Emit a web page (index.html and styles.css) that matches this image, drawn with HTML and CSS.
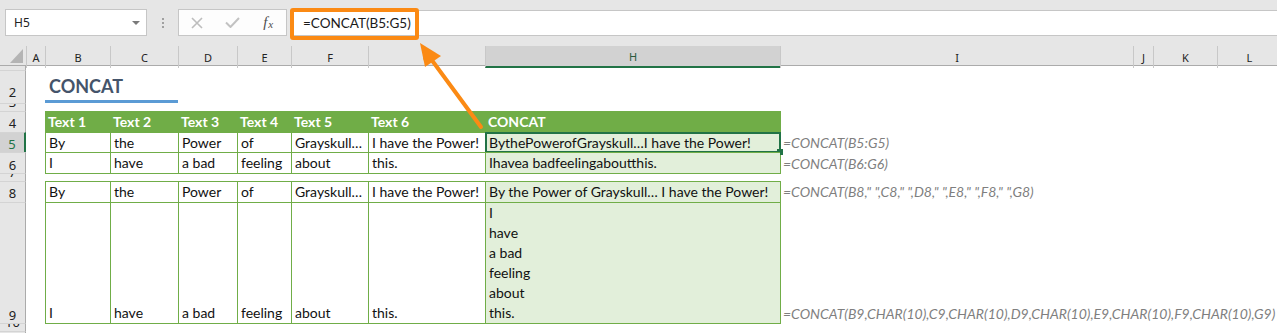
FILE: index.html
```html
<!DOCTYPE html>
<html lang="en">
<head>
    <meta charset="UTF-8">
    <meta name="viewport" content="width=device-width, initial-scale=1.0">
    <title>CONCAT</title>
    <link rel="stylesheet" href="styles.css">
</head>
<body>

    <div class="toolbar">
        <div class="namebox"><span>H5</span><span class="drop"></span></div>
        <div class="grip"><i></i><i></i><i></i></div>
        <div class="fbuttons">
            <span class="fbtn">
                <svg width="12" height="12" viewBox="0 0 12 12"><path d="M1 1 L11 11 M11 1 L1 11" stroke="#bdbdbd" stroke-width="1.6" fill="none"/></svg>
            </span>
            <span class="fbtn">
                <svg width="15" height="11" viewBox="0 0 15 11"><path d="M1 5.5 L5.5 10 L14 1" stroke="#c2c2c2" stroke-width="2" fill="none"/></svg>
            </span>
            <span class="fbtn fx"><i>f</i><i class="x">x</i></span>
        </div>
        <div class="formula">
            <span class="ftext">=CONCAT(B5:G5)</span>
            <span class="callout"></span>
        </div>
    </div>

    <div class="sheet">
        <div class="row colhead">
            <div class="corner">
                <svg width="25" height="19" viewBox="0 0 25 19"><path d="M10 17 L23 17 L23 3 Z" fill="#b4b4b4"/></svg>
            </div>
            <div class="ch">A</div>
            <div class="ch">B</div>
            <div class="ch">C</div>
            <div class="ch">D</div>
            <div class="ch">E</div>
            <div class="ch">F</div>
            <div class="ch">G</div>
            <div class="ch active">H</div>
            <div class="ch">I</div>
            <div class="ch">J</div>
            <div class="ch">K</div>
            <div class="ch">L</div>
        </div>

        <div class="row r1"><div class="rh first">1</div></div>

        <div class="row r2">
            <div class="rh">2</div>
            <div class="c title">CONCAT</div>
        </div>

        <div class="row r3"><div class="rh">3</div></div>

        <div class="row r4">
            <div class="rh">4</div>
            <div class="c hd">Text 1</div>
            <div class="c hd">Text 2</div>
            <div class="c hd">Text 3</div>
            <div class="c hd">Text 4</div>
            <div class="c hd">Text 5</div>
            <div class="c hd">Text 6</div>
            <div class="c hd">CONCAT</div>
            <div class="c f"></div>
        </div>

        <div class="row r5">
            <div class="rh sel">5</div>
            <div class="c t">By</div>
            <div class="c t">the</div>
            <div class="c t">Power</div>
            <div class="c t">of</div>
            <div class="c t">Grayskull…</div>
            <div class="c t">I have the Power!</div>
            <div class="c t h">BythePowerofGrayskull…I have the Power!<span class="selection"><span class="handle"></span></span></div>
            <div class="c f">=CONCAT(B5:G5)</div>
        </div>

        <div class="row r6">
            <div class="rh">6</div>
            <div class="c t last">I</div>
            <div class="c t last">have</div>
            <div class="c t last">a bad</div>
            <div class="c t last">feeling</div>
            <div class="c t last">about</div>
            <div class="c t last">this.</div>
            <div class="c t last h">Ihavea badfeelingaboutthis.</div>
            <div class="c f">=CONCAT(B6:G6)</div>
        </div>

        <div class="row r7"><div class="rh">7</div></div>

        <div class="row r8">
            <div class="rh">8</div>
            <div class="c t">By</div>
            <div class="c t">the</div>
            <div class="c t">Power</div>
            <div class="c t">of</div>
            <div class="c t">Grayskull…</div>
            <div class="c t">I have the Power!</div>
            <div class="c t h">By the Power of Grayskull… I have the Power!</div>
            <div class="c f">=CONCAT(B8," ",C8," ",D8," ",E8," ",F8," ",G8)</div>
        </div>

        <div class="row r9">
            <div class="rh">9</div>
            <div class="c t last">I</div>
            <div class="c t last">have</div>
            <div class="c t last">a bad</div>
            <div class="c t last">feeling</div>
            <div class="c t last">about</div>
            <div class="c t last">this.</div>
            <div class="c t last h">I<br>have<br>a bad<br>feeling<br>about<br>this.</div>
            <div class="c f">=CONCAT(B9,CHAR(10),C9,CHAR(10),D9,CHAR(10),E9,CHAR(10),F9,CHAR(10),G9)</div>
        </div>

        <div class="row r10"><div class="rh">10</div></div>
        <div class="row r11"><div class="rh">11</div></div>
    </div>

    <svg class="arrow" width="1277" height="333" viewBox="0 0 1277 333">
        <line x1="481" y1="127" x2="431" y2="59" stroke="#fb8a14" stroke-width="4" stroke-linecap="round"/>
        <polygon points="420,43 441,56 425,67" fill="#fb8a14"/>
    </svg>

</body>
</html>
```

FILE: styles.css
```css
*{
    margin: 0;
    padding: 0;
    box-sizing: border-box;
}

body{
    position: relative;
    width: 1277px;
    height: 333px;
    overflow: hidden;
    background-color: #fff;
    font-family: Lato, sans-serif;
    color: #111;
}

/* formula bar */

.toolbar{
    height: 46px;
    padding-top: 9px;
    display: flex;
    align-items: flex-start;
    background-color: #e6e6e6;
}

.namebox{
    width: 142px;
    height: 27px;
    margin-left: 5px;
    padding: 0 6px 0 8px;
    display: flex;
    align-items: center;
    justify-content: space-between;
    background-color: #fff;
    border: 1px solid #c6c6c6;
    font-family: "Noto Sans", sans-serif;
    font-size: 12px;
    color: #222;
}

.drop{
    border-left: 4px solid transparent;
    border-right: 4px solid transparent;
    border-top: 4px solid #7a7a7a;
}

.grip{
    width: 31px;
    padding-top: 9px;
    display: flex;
    flex-direction: column;
    align-items: center;
    gap: 2px;
}

.grip i{
    width: 2px;
    height: 2px;
    background-color: #a0a0a0;
}

.fbuttons{
    width: 109px;
    height: 27px;
    display: flex;
    align-items: center;
    background-color: #fdfdfd;
    border: 1px solid #c6c6c6;
}

.fbtn{
    width: 36px;
    display: flex;
    justify-content: center;
    align-items: center;
}

.fx{
    font-family: "Liberation Serif", serif;
    font-size: 15px;
    color: #4d4d4d;
}

.fx .x{
    font-size: 11px;
    margin-left: 1px;
    margin-top: 3px;
}

.formula{
    position: relative;
    flex: 1;
    height: 26px;
    margin-left: 3px;
    margin-top: 1px;
    padding-left: 13px;
    display: flex;
    align-items: center;
    background-color: #fff;
    border-top: 1px solid #c6c6c6;
    border-bottom: 1px solid #c6c6c6;
}

.ftext{
    font-size: 13.5px;
    color: #1a1a1a;
}

.callout{
    position: absolute;
    left: 0;
    top: -3px;
    width: 129px;
    height: 32px;
    border: 4px solid #fb8a14;
    border-radius: 3px;
}

/* sheet grid */

.row{
    display: grid;
    grid-template-columns: 26px 19px 65px 68px 59px 54px 77px 117px 295px 353px 20px 64px 64px;
}

.colhead{
    height: 20px;
    background-color: #e6e6e6;
    border-bottom: 1px solid #ababab;
}

.ch{
    display: flex;
    align-items: center;
    justify-content: center;
    border-left: 1px solid #c8c8c8;
    font-family: "Noto Sans", sans-serif;
    font-size: 11px;
    color: #222;
}

.ch.active{
    background-color: #d2d2d2;
    border-bottom: 2px solid #217346;
    color: #2c5a3d;
}

.rh{
    grid-column-start: 1;
    display: flex;
    align-items: flex-end;
    justify-content: center;
    overflow: hidden;
    background-color: #e6e6e6;
    border-right: 1px solid #ababab;
    border-top: 1px solid #d4d4d4;
    font-family: "Noto Sans", sans-serif;
    font-size: 13px;
    line-height: 18px;
    color: #222;
}

.rh.first{
    border-top: none;
}

.rh.sel{
    background-color: #d2d2d2;
    border-right: 2px solid #217346;
    color: #217346;
}

.r1{ height: 4px; }
.r2{ height: 33px; }
.r3{ height: 8px; }
.r4{ height: 21px; }
.r5{ height: 20px; }
.r6{ height: 21px; }
.r7{ height: 8px; }
.r8{ height: 21px; }
.r9{ height: 121px; }
.r10{ height: 8px; }
.r11{ height: 20px; }

.r2 .rh{
    padding-bottom: 2px;
}

.c{
    display: flex;
    align-items: flex-end;
    padding-left: 3px;
    font-size: 14px;
    line-height: 20px;
    white-space: nowrap;
}

.rh + .c{
    grid-column-start: 3;
}

.title{
    grid-column: 3 / span 2;
    padding-left: 4px;
    padding-bottom: 4px;
    border-bottom: 3px solid #5b9bd5;
    font-size: 18px;
    font-weight: 700;
    color: #44546a;
}

.hd{
    background-color: #70ad47;
    color: #fff;
    font-weight: 700;
}

.t{
    position: relative;
    border-left: 1px solid #70ad47;
    border-top: 1px solid #70ad47;
}

.t.last{
    border-bottom: 1px solid #70ad47;
}

.h{
    background-color: #e2efda;
}

.f{
    padding-left: 2px;
    border-left: 1px solid #70ad47;
    font-style: italic;
    color: #7f7f7f;
}

.selection{
    position: absolute;
    left: -1px;
    top: -1px;
    width: 296px;
    height: 21px;
    border: 2px solid #217346;
}

.handle{
    position: absolute;
    right: -4px;
    bottom: -4px;
    width: 6px;
    height: 6px;
    background-color: #217346;
}

.arrow{
    position: absolute;
    left: 0;
    top: 0;
    pointer-events: none;
}
```
